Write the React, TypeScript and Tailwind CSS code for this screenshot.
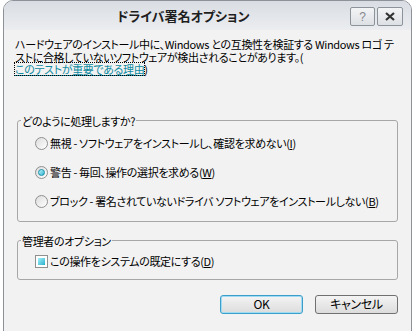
import React from "react";

const font = "font-['Noto_Sans_CJK_JP','Liberation_Sans',sans-serif] [font-feature-settings:'palt']";

function Radio({ checked }: { checked?: boolean }) {
  return (
    <span className="relative inline-flex h-[13px] w-[13px] shrink-0 items-center justify-center rounded-full border border-[#8e8f8f] bg-gradient-to-br from-[#dcdcdc] to-white">
      {checked && (
        <span className="h-[7px] w-[7px] rounded-full border border-[#1b8fa8] bg-gradient-to-br from-[#b6f3fb] to-[#18b4d0]" />
      )}
    </span>
  );
}

function Option({ label, k, checked }: { label: string; k: string; checked?: boolean }) {
  return (
    <div className="flex h-[16px] items-center gap-[2px] pl-[17px]">
      <Radio checked={checked} />
      <span className="whitespace-nowrap">
        {label}(<span className="underline">{k}</span>)
      </span>
    </div>
  );
}

export default function App() {
  return (
    <div className={`h-[331px] w-[417px] overflow-hidden bg-white text-[11px] tracking-[-0.35px] text-black ${font}`}>
      <div className="ml-[3px] flex h-[340px] w-[409px] flex-col overflow-hidden rounded-t-[10px] border border-[#8d9299] bg-[#f2f2f2]">
        <div className="flex h-[29px] shrink-0 items-center bg-gradient-to-b from-[#d9dde3] to-[#ebedf0] pr-[8px]">
          <span className="ml-[113px] text-[13px] font-bold tracking-normal text-[#1e1e1e]">ドライバ署名オプション</span>
          <div className="ml-auto flex gap-[2px] self-start pt-[6px]">
            <span className="flex h-[19px] w-[25px] items-center justify-center rounded-[2px] border border-[#8d939a] bg-gradient-to-b from-[#f3f4f6] to-[#dde0e4] font-['Liberation_Sans',sans-serif] text-[12px] text-[#85888d]">?</span>
            <span className="flex h-[19px] w-[26px] items-center justify-center rounded-[2px] border border-[#8d939a] bg-gradient-to-b from-[#f3f4f6] to-[#dde0e4]">
              <svg width="10" height="9" viewBox="0 0 10 9">
                <path d="M1 1 L9 8 M9 1 L1 8" stroke="#333" strokeWidth="2.2" />
              </svg>
            </span>
          </div>
        </div>
        <div className="flex flex-col px-[11px] pt-[8px]">
          <p className="leading-[12.5px]">
            ハードウェアのインストール中に、Windows との互換性を検証する Windows ロゴ テストに合格していないソフトウェアが検出されることがあります。(
            <br />
            <span className="inline-block h-[12px] leading-[12px] text-[#0f8aa0] underline outline-1 outline-dotted outline-black">このテストが重要である理由</span>)
          </p>

          <fieldset className="mx-[2px] mt-[37px] rounded-[3px] border border-[#a7a7a7] pb-[11px] pt-[7px]">
            <legend className="ml-[3px] px-[1px] leading-[16px]">どのように処理しますか?</legend>
            <div className="flex flex-col gap-[13px]">
              <Option label="無視 - ソフトウェアをインストールし、確認を求めない" k="I" />
              <Option label="警告 - 毎回、操作の選択を求める" k="W" checked />
              <Option label="ブロック - 署名されていないドライバ ソフトウェアをインストールしない" k="B" />
            </div>
          </fieldset>

          <fieldset className="mx-[2px] mt-[11px] rounded-[3px] border border-[#a7a7a7] pb-[9px] pt-[5px]">
            <legend className="ml-[3px] px-[1px] leading-[16px]">管理者のオプション</legend>
            <div className="flex h-[16px] items-center gap-[2px] pl-[17px]">
              <span className="flex h-[13px] w-[13px] items-center justify-center border border-[#8e8f8f] bg-white">
                <span className="h-[7px] w-[7px] bg-gradient-to-br from-[#9ff0fa] to-[#14b0cc]" />
              </span>
              <span>
                この操作をシステムの既定にする(<span className="underline">D</span>)
              </span>
            </div>
          </fieldset>

          <div className="mt-[15px] flex justify-end gap-[12px] pr-[2px]">
            <button className="h-[19px] w-[83px] rounded-[3px] border border-[#3c9fc9] bg-gradient-to-b from-[#f4f4f4] to-[#dcdcdc] text-[12px] leading-none shadow-[inset_0_0_0_1px_#9fdcf3]">OK</button>
            <button className="h-[19px] w-[83px] rounded-[3px] border border-[#707070] bg-gradient-to-b from-[#f4f4f4] to-[#dcdcdc] text-[12px] leading-none">キャンセル</button>
          </div>
        </div>
      </div>
    </div>
  );
}
